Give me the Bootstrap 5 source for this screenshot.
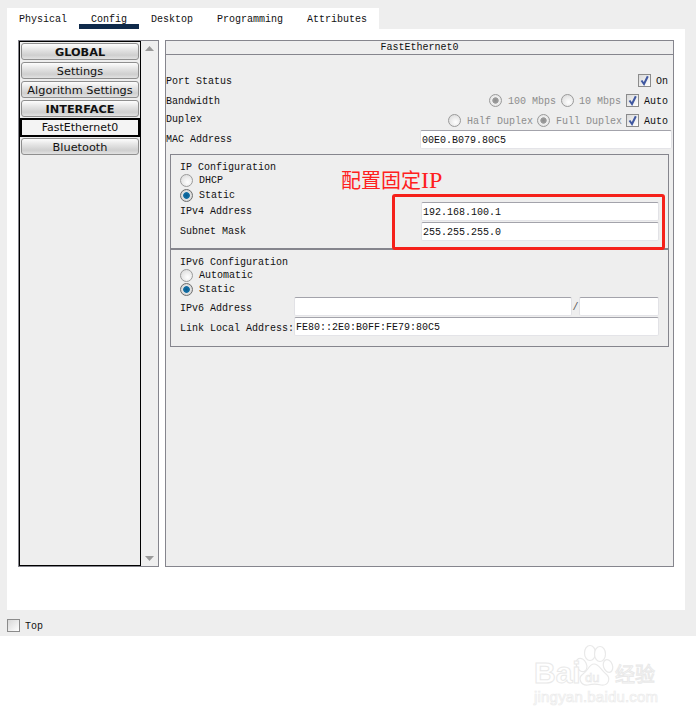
<!DOCTYPE html>
<html lang="en">
<head>
<meta charset="utf-8">
<title>FastEthernet0 Config</title>
<link rel="stylesheet" href="https://cdn.jsdelivr.net/npm/bootstrap@5.3.0/dist/css/bootstrap.min.css">
<style>
html,body{margin:0;background:#fff}
body{width:696px;height:719px;position:relative;overflow:hidden;font-family:"Liberation Mono",monospace;font-size:10px;line-height:14px;color:#111}
.win{background:#eee;height:636px;padding-top:8px}
.tabbar{margin-left:7px;width:372px;height:21px;background:#fff;flex-wrap:nowrap}
.tabbar .nav-link{padding:5px 12px 0;height:21px;font-size:10px;line-height:14px;color:#111;border-radius:0;background:none}
.tabbar .nav-link.active{color:#111;background:none;box-shadow:inset 0 -5px 0 #0f2a4a}
.sheet{margin:0 11px 0 7px;height:581px;background:#fff;padding:11px 11px 0}
.leftbox{width:141px;height:527px;border:1px solid #85858d;background:#eee}
.devlist{width:122px;height:525px;border:1px solid #000;padding:1px 1px 0;gap:2px;background:#eee}
.devbtn{display:block;width:118px;height:17px;padding:0;border:1px solid #8f8f8f;border-radius:3px;font-family:"DejaVu Sans",sans-serif;font-size:11.3px;line-height:17px;color:#111;background:linear-gradient(#fdfdfd,#e6e6e6 35%,#cfcfcf 75%,#e2e2e2);white-space:nowrap}
.devbtn.head{font-weight:700}
.devbtn.sel{width:120px;margin:-1px 0 -1px -1px;height:19px;background:#f4f4f4;border:2px solid #000;border-radius:0;line-height:16px;font-size:11px}
.scrolltrack{width:17px;background:#efefef}
.scrolltrack svg{display:block;margin:5px auto}
.rightbox{width:509px;height:527px;margin-left:6px;border:1px solid #85858d;background:#eee}
.paneltitle{height:14px;border-bottom:1px solid #85858d;text-align:center;line-height:14px}
.line{height:20px;padding-right:5px}
.linelabel{margin-right:auto}
.linetext{padding-top:3px}
.gap15{height:15px}
.off{color:#8d8d8d}
.ck{width:13px;height:13px;flex:none;border:1px solid #8b8b8b;background:linear-gradient(135deg,#d8d8d8,#fff);display:block}
.rd{width:13px;height:13px;flex:none;border-radius:50%;border:1px solid #9a9a9a;background:radial-gradient(circle at 60% 65%,#fff,#d6d6d6);display:block}
.rd.dis-on{background:radial-gradient(circle,#8f8f8f 0,#9d9d9d 36%,#f0f0f0 46%,#d8d8d8 100%)}
.rd.on{border-color:#6f6f6f;background:radial-gradient(circle,#0a5c8f 0,#126fa5 38%,#e4e4e4 48%,#c4c4c4 100%)}
.field{height:19px;background:#fff;border-top:1px solid #a3a3ab;border-left:1px solid #e2e2e6;border-right:1px solid #e2e2e6;border-bottom:1px solid #e4e4e8;border-radius:2px;padding-left:1px;line-height:20px;white-space:nowrap;overflow:hidden}
.macfield{width:252px;margin-left:auto;margin-right:1px}
.groupbox{margin:4px 5px 0 4px;width:499px;height:193px;border:1px solid #85858d;background:#eee}
.sec4{height:95px;padding:5px 9px 0;border-bottom:2px solid #85858d}
.sec6{height:96px;padding:5px 9px 0}
.ttl{height:13px;line-height:15px}
.opt{height:15px;gap:6px}
.opt .opttext{padding-top:1px}
.fieldrow{height:20px}
.fieldrow .lbl{line-height:20px;white-space:nowrap}
.sec6 .fieldrow .lbl{line-height:24px}
.f238{width:238px;margin-left:auto}
.f80{width:80px}
.f278{width:278px}
.f365{width:365px}
.slash{width:7px;text-align:center;color:#555;line-height:22px}
.bottomline{height:26px;padding:9px 0 0 7px;gap:5px;line-height:15px}
.note{position:absolute;left:341px;top:168px;color:#ff2020;font-family:"Noto Sans CJK SC",sans-serif;font-size:20px;line-height:24px;white-space:nowrap}
.note .ipword{font-family:"Liberation Serif",serif;font-size:24px}
.redframe{position:absolute;left:392px;top:194px;width:273px;height:56px;border:3px solid #f5201a;border-radius:3px;pointer-events:none}
.wm{position:absolute;left:530px;top:642px;width:140px;height:66px}
.wmtxt{position:absolute;white-space:nowrap;color:#fff;-webkit-text-stroke:1px #e9e9e9;font-family:"Liberation Sans",sans-serif}
.wmbai{left:4px;top:16px;font-size:30px;line-height:30px;font-weight:700}
.wmjy{left:85px;top:21px;font-size:20px;line-height:22px;font-family:"Noto Sans CJK SC",sans-serif}
.wmurl{left:4px;top:47px;font-size:15px;line-height:16px;-webkit-text-stroke:.7px #ebebeb;letter-spacing:.2px}
.wmdu{left:55px;top:29px;font-size:13px;line-height:14px;-webkit-text-stroke:.6px #e6e6e6}
.wm svg{position:absolute;left:45px;top:2px}
</style>
</head>
<body>
<svg width="0" height="0" class="position-absolute">
<defs>
<symbol id="tick" viewBox="0 0 11 11"><path d="M2.500 5.500 L5 9 L8.800 1.200" fill="none" stroke="#3f57a0" stroke-width="2"/></symbol>
</defs>
</svg>
<div class="win">
  <ul class="nav tabbar">
    <li class="nav-item"><a class="nav-link" href="#">Physical</a></li>
    <li class="nav-item"><a class="nav-link active" href="#">Config</a></li>
    <li class="nav-item"><a class="nav-link" href="#">Desktop</a></li>
    <li class="nav-item"><a class="nav-link" href="#">Programming</a></li>
    <li class="nav-item"><a class="nav-link" href="#">Attributes</a></li>
  </ul>
  <div class="sheet d-flex">
    <div class="leftbox d-flex">
      <div class="devlist d-flex flex-column">
        <button type="button" class="btn devbtn head">GLOBAL</button>
        <button type="button" class="btn devbtn">Settings</button>
        <button type="button" class="btn devbtn">Algorithm Settings</button>
        <button type="button" class="btn devbtn head">INTERFACE</button>
        <button type="button" class="btn devbtn sel">FastEthernet0</button>
        <button type="button" class="btn devbtn">Bluetooth</button>
      </div>
      <div class="scrolltrack d-flex flex-column justify-content-between">
        <svg width="9" height="5"><path d="M4.500 0 L9 5 H0Z" fill="#9a9a9a"/></svg>
        <svg width="9" height="5"><path d="M0 0 H9 L4.500 5Z" fill="#9a9a9a"/></svg>
      </div>
    </div>
    <div class="rightbox">
      <div class="paneltitle">FastEthernet0</div>
      <div class="gap15"></div>
      <div class="line d-flex align-items-center">
        <span class="linelabel linetext">Port Status</span>
        <span class="ck"><svg width="11" height="11" class="d-block"><use href="#tick"/></svg></span>
        <span class="linetext" style="margin-left:5px">On</span>
      </div>
      <div class="line d-flex align-items-center">
        <span class="linelabel linetext">Bandwidth</span>
        <span class="rd dis-on"></span>
        <span class="off linetext" style="margin:0 5px 0 6px">100 Mbps</span>
        <span class="rd"></span>
        <span class="off linetext" style="margin:0 5px 0 5px">10 Mbps</span>
        <span class="ck"><svg width="11" height="11" class="d-block"><use href="#tick"/></svg></span>
        <span class="linetext" style="margin-left:5px">Auto</span>
      </div>
      <div class="line d-flex align-items-center" style="height:18px;padding-top:2px">
        <span class="linelabel">Duplex</span>
        <span class="rd"></span>
        <span class="off linetext" style="margin:0 4px 0 6px">Half Duplex</span>
        <span class="rd dis-on"></span>
        <span class="off linetext" style="margin:0 4px 0 6px">Full Duplex</span>
        <span class="ck"><svg width="11" height="11" class="d-block"><use href="#tick"/></svg></span>
        <span class="linetext" style="margin-left:5px">Auto</span>
      </div>
      <div class="d-flex" style="height:22px;padding-top:2px">
        <span style="line-height:19px">MAC Address</span>
        <div class="field macfield">00E0.B079.80C5</div>
      </div>
      <div class="groupbox">
        <div class="sec4">
          <div class="ttl">IP Configuration</div>
          <div class="opt d-flex align-items-center"><span class="rd"></span><span class="opttext">DHCP</span></div>
          <div class="opt d-flex align-items-center" style="height:14px"><span class="rd on"></span><span class="opttext">Static</span></div>
          <div class="fieldrow d-flex"><span class="lbl">IPv4 Address</span><div class="field f238">192.168.100.1</div></div>
          <div class="fieldrow d-flex"><span class="lbl">Subnet Mask</span><div class="field f238">255.255.255.0</div></div>
        </div>
        <div class="sec6">
          <div class="ttl">IPv6 Configuration</div>
          <div class="opt d-flex align-items-center" style="height:14px"><span class="rd"></span><span class="opttext">Automatic</span></div>
          <div class="opt d-flex align-items-center"><span class="rd on"></span><span class="opttext">Static</span></div>
          <div class="fieldrow d-flex"><span class="lbl">IPv6 Address</span>
            <div class="d-flex ms-auto"><div class="field f278"></div><div class="slash">/</div><div class="field f80"></div></div>
          </div>
          <div class="fieldrow d-flex"><span class="lbl">Link Local Address:</span><div class="field f365 ms-auto">FE80::2E0:B0FF:FE79:80C5</div></div>
        </div>
      </div>
    </div>
  </div>
  <div class="bottomline d-flex">
    <span class="ck"></span><span>Top</span>
  </div>
</div>
<div class="note">配置固定<span class="ipword">IP</span></div>
<div class="redframe"></div>
<div class="wm">
  <svg width="40" height="44" viewBox="0 0 40 44" fill="#fff" stroke="#e9e9e9" stroke-width="1.2">
    <ellipse cx="6.500" cy="21" rx="5" ry="7" transform="rotate(-25 6.500 21)"/>
    <ellipse cx="15" cy="9" rx="5.500" ry="7.500"/>
    <ellipse cx="25" cy="10" rx="5.500" ry="7.500"/>
    <ellipse cx="33" cy="22" rx="4.500" ry="6.500" transform="rotate(-20 33 22)"/>
    <path d="M19 20 C14 20 13 27 8 30 C2 34 6 42 13 41 C17 40 22 40 26 41 C34 42 36 34 31 30 C26 26 24 20 19 20Z"/>
  </svg>
  <span class="wmtxt wmbai">Bai</span>
  <span class="wmtxt wmdu">du</span>
  <span class="wmtxt wmjy">经验</span>
  <span class="wmtxt wmurl">jingyan.baidu.com</span>
</div>
<script src="https://cdn.jsdelivr.net/npm/bootstrap@5.3.0/dist/js/bootstrap.bundle.min.js"></script>
</body>
</html>
